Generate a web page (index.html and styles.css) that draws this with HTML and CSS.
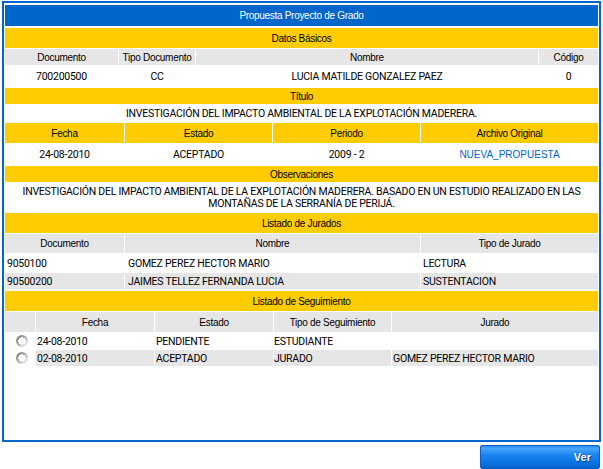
FILE: index.html
```html
<!DOCTYPE html>
<html lang="es">
<head>
<meta charset="utf-8">
<title>Propuesta Proyecto de Grado</title>
<link rel="stylesheet" href="styles.css">
</head>
<body>
<div class="panel">
  <div class="titlebar h">Propuesta Proyecto de Grado</div>

  <div class="band h b-basic">Datos Básicos</div>
  <div class="grid cols-basic gray h r-gh1">
    <div class="c">Documento</div><div class="c">Tipo Documento</div><div class="c">Nombre</div><div class="c">Código</div>
  </div>
  <div class="grid cols-basic d r-d1">
    <div class="c">700200500</div><div class="c">CC</div><div class="c">LUCIA MATILDE GONZALEZ PAEZ</div><div class="c">0</div>
  </div>

  <div class="band h b-titulo">Título</div>
  <div class="line d r-t">INVESTIGACIÓN DEL IMPACTO AMBIENTAL DE LA EXPLOTACIÓN MADERERA.</div>

  <div class="grid cols-fecha yellow h r-yh3">
    <div class="c">Fecha</div><div class="c">Estado</div><div class="c">Periodo</div><div class="c">Archivo Original</div>
  </div>
  <div class="grid cols-fecha d r-d3">
    <div class="c">24-08-2010</div><div class="c">ACEPTADO</div><div class="c">2009 - 2</div><div class="c"><a class="link" href="#">NUEVA_PROPUESTA</a></div>
  </div>

  <div class="band h b-obs">Observaciones</div>
  <div class="obs d">INVESTIGACIÓN DEL IMPACTO AMBIENTAL DE LA EXPLOTACIÓN MADERERA. BASADO EN UN ESTUDIO REALIZADO EN LAS<br>MONTAÑAS DE LA SERRANÍA DE PERIJÁ.</div>

  <div class="band h b-jur">Listado de Jurados</div>
  <div class="grid cols-jur gray h r-gh5">
    <div class="c">Documento</div><div class="c">Nombre</div><div class="c">Tipo de Jurado</div>
  </div>
  <div class="grid cols-jur d r-w">
    <div class="l">9050100</div><div class="l l3">GOMEZ PEREZ HECTOR MARIO</div><div class="l">LECTURA</div>
  </div>
  <div class="grid cols-jur d gray r-g">
    <div class="l">90500200</div><div class="l l3">JAIMES TELLEZ FERNANDA LUCIA</div><div class="l">SUSTENTACION</div>
  </div>

  <div class="band h b-seg">Listado de Seguimiento</div>
  <div class="grid cols-seg gray h r-gh6">
    <div class="c"></div><div class="c">Fecha</div><div class="c">Estado</div><div class="c">Tipo de Seguimiento</div><div class="c">Jurado</div>
  </div>
  <div class="grid cols-seg d r-w6">
    <div class="radio-cell"><span class="radio"></span></div><div class="l l1">24-08-2010</div><div class="l l1">PENDIENTE</div><div class="l l0">ESTUDIANTE</div><div class="l l1"></div>
  </div>
  <div class="grid cols-seg d gray r-g6">
    <div class="radio-cell"><span class="radio"></span></div><div class="l l1">02-08-2010</div><div class="l l1">ACEPTADO</div><div class="l l0">JURADO</div><div class="l l1">GOMEZ PEREZ HECTOR MARIO</div>
  </div>
</div>
<div class="actions">
  <button class="btn" type="button">Ver</button>
</div>
</body>
</html>
```
FILE: styles.css
```css
html, body {
  margin: 0;
  padding: 0;
  background: #ffffff;
}
body {
  color: #000;
}
.panel {
  box-sizing: border-box;
  margin: 1px 0 0 2px;
  width: 599px;
  height: 441px;
  border: 2px solid #0066cc;
  padding: 2px 1px;
  display: flex;
  flex-direction: column;
}
.h {
  font-family: "Liberation Sans", Arial, sans-serif;
  font-size: 10px;
  letter-spacing: -0.3px;
}
.d {
  font-family: Roboto, "Liberation Sans", Arial, sans-serif;
  font-size: 10.5px;
  letter-spacing: -0.25px;
  white-space: nowrap;
}
.titlebar {
  height: 21px;
  background: #0066cc;
  color: #fff;
  display: flex;
  align-items: center;
  justify-content: center;
}
.band {
  background: #ffcc00;
  display: flex;
  align-items: center;
  justify-content: center;
}
.b-basic { margin-top: 2px; height: 20px; }
.b-titulo { margin-top: 1px; height: 16px; }
.b-obs { height: 16px; }
.b-jur { height: 20px; }
.b-seg { margin-top: 2px; height: 20px; }

.grid {
  display: grid;
  column-gap: 1px;
}
.cols-basic { grid-template-columns: 113px 76px 342px 59px; }
.cols-fecha { grid-template-columns: 119px 147px 147px 177px; }
.cols-jur { grid-template-columns: 119px 295px 177px; }
.cols-seg { grid-template-columns: 30px 118px 118px 117px 206px; }

.gray > div { background: #e6e6e6; }
.yellow > div { background: #ffcc00; }

.c {
  display: flex;
  align-items: center;
  justify-content: center;
  white-space: nowrap;
}
.l {
  display: flex;
  align-items: center;
  padding-left: 2px;
  white-space: nowrap;
}
.l3 { padding-left: 3px; }
.l1 { padding-left: 1px; }
.l0 { padding-left: 0; }

.r-gh1 { margin-top: 1px; height: 16px; }
.r-d1 { height: 22px; }
.r-t {
  height: 18px;
  display: flex;
  align-items: center;
  justify-content: center;
}
.r-yh3 { margin-top: 1px; height: 20px; }
.r-d3 { height: 23px; }
.obs {
  height: 31px;
  line-height: 12px;
  text-align: center;
  display: flex;
  align-items: center;
  justify-content: center;
}
.r-gh5 { margin-top: 1px; height: 19px; }
.r-w { margin-top: 1px; height: 18px; }
.r-g { margin-top: 1px; height: 16px; }
.r-gh6 { margin-top: 1px; height: 20px; }
.r-w6 { height: 18px; }
.r-g6 { height: 16px; }

.link {
  font-family: "Liberation Sans", Arial, sans-serif;
  font-size: 10px;
  letter-spacing: 0;
  color: #0066cc;
  text-decoration: none;
}

.radio-cell {
  display: flex;
  align-items: center;
  padding-left: 11px;
}
.gray > .radio-cell { background: transparent; }
.radio {
  box-sizing: border-box;
  width: 12px;
  height: 12px;
  border-radius: 50%;
  background:
    radial-gradient(circle at 50% 50%, #ffffff 0 3.6px, transparent 3.8px),
    linear-gradient(135deg, #6f6f6f 0%, #a8a8a8 45%, #e4e4e4 80%, #f4f4f4 100%);
}

.actions {
  display: flex;
  justify-content: flex-end;
  padding: 3px 3px 0 0;
}
.btn {
  box-sizing: border-box;
  width: 120px;
  height: 24px;
  border: 1px solid #0a5fc4;
  border-radius: 2px;
  background: linear-gradient(#2a8cf0 0%, #4aa6ff 12%, #1b84f2 40%, #0c72e2 75%, #0a64cc 100%);
  color: #fff;
  font-family: "Liberation Sans", Arial, sans-serif;
  font-weight: bold;
  font-size: 11px;
  text-align: right;
  padding: 0 8px 0 0;
  text-shadow: 1px 1px 0 #06408a;
}
```
